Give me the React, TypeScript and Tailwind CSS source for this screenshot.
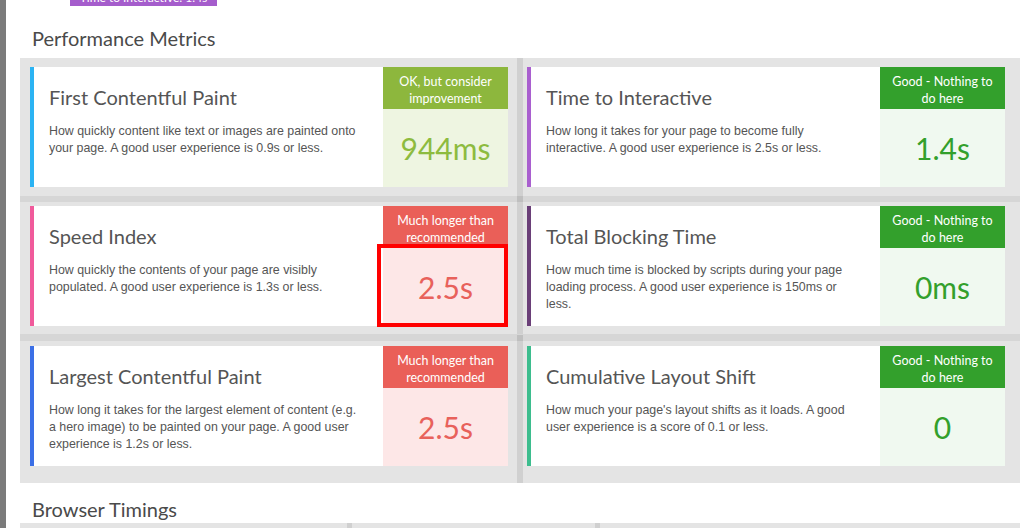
type Tone = 'ok' | 'good' | 'bad';

interface Metric {
  title: string;
  lines: string[];
  bar: string;
  tone: Tone;
  label: string[];
  value: string;
  marked?: boolean;
}

const tones = {
  ok: { head: 'bg-[#8db73d]', panel: 'bg-[#eef5e1]', text: 'text-[#8dbb3f]' },
  good: { head: 'bg-[#33a02c]', panel: 'bg-[#f0f9f0]', text: 'text-[#33a02c]' },
  bad: { head: 'bg-[#ea5f58]', panel: 'bg-[#fde7e7]', text: 'text-[#e8615b]' },
} as const;

const rows: [Metric, Metric][] = [
  [
    {
      title: 'First Contentful Paint',
      lines: ['How quickly content like text or images are painted onto', 'your page. A good user experience is 0.9s or less.'],
      bar: 'border-[#2bb3f3]',
      tone: 'ok',
      label: ['OK, but consider', 'improvement'],
      value: '944ms',
    },
    {
      title: 'Time to Interactive',
      lines: ['How long it takes for your page to become fully', 'interactive. A good user experience is 2.5s or less.'],
      bar: 'border-[#a95fcf]',
      tone: 'good',
      label: ['Good - Nothing to', 'do here'],
      value: '1.4s',
    },
  ],
  [
    {
      title: 'Speed Index',
      lines: ['How quickly the contents of your page are visibly', 'populated. A good user experience is 1.3s or less.'],
      bar: 'border-[#f05a9b]',
      tone: 'bad',
      label: ['Much longer than', 'recommended'],
      value: '2.5s',
      marked: true,
    },
    {
      title: 'Total Blocking Time',
      lines: [
        'How much time is blocked by scripts during your page',
        'loading process. A good user experience is 150ms or',
        'less.',
      ],
      bar: 'border-[#6a3f78]',
      tone: 'good',
      label: ['Good - Nothing to', 'do here'],
      value: '0ms',
    },
  ],
  [
    {
      title: 'Largest Contentful Paint',
      lines: [
        'How long it takes for the largest element of content (e.g.',
        'a hero image) to be painted on your page. A good user',
        'experience is 1.2s or less.',
      ],
      bar: 'border-[#3b6fe6]',
      tone: 'bad',
      label: ['Much longer than', 'recommended'],
      value: '2.5s',
    },
    {
      title: 'Cumulative Layout Shift',
      lines: ["How much your page's layout shifts as it loads. A good", 'user experience is a score of 0.1 or less.'],
      bar: 'border-[#3dbd8e]',
      tone: 'good',
      label: ['Good - Nothing to', 'do here'],
      value: '0',
    },
  ],
];

const heading = "font-['Lato','Noto_Sans',sans-serif]";

function MetricCard({ m }: { m: Metric }) {
  const t = tones[m.tone];
  return (
    <div className="flex h-[120px] w-[478px] bg-white">
      <div className={`flex-1 border-l-4 ${m.bar} pl-[15px] pt-[18px]`}>
        <div className={`${heading} text-[20px] leading-[24px] text-[#555]`}>{m.title}</div>
        <div className="mt-[14px] font-['Liberation_Sans',Arial,sans-serif] text-[12.4px] leading-[17px] text-[#555] whitespace-nowrap">
          {m.lines.map((l, i) => (
            <div key={i}>{l}</div>
          ))}
        </div>
      </div>
      <div className={`relative flex w-[125px] flex-col ${t.panel}`}>
        <div className={`${t.head} h-[42px] pt-[6px] text-center ${heading} text-[12.5px] leading-[17px] text-white`}>
          {m.label.map((l, i) => (
            <div key={i}>{l}</div>
          ))}
        </div>
        <div className={`flex flex-1 items-center justify-center ${heading} text-[30px] ${t.text}`}>{m.value}</div>
        {m.marked && (
          <div className="absolute left-[-6px] right-0 top-[38px] bottom-[-1px] border-[4px] border-[#ff0000]" />
        )}
      </div>
    </div>
  );
}

function HSep() {
  return (
    <div className="flex h-[6px]">
      <div className="w-[497px] bg-[#d6d6d6]" />
      <div className="w-[6px] bg-[#bfbfbf]" />
      <div className="flex-1 bg-[#d6d6d6]" />
    </div>
  );
}

export default function App() {
  const pads = ['pt-[9px] pb-[9px]', 'pt-[4px] pb-[8px]', 'pt-[5px] pb-[17px]'];
  return (
    <div className="flex h-[528px] overflow-hidden bg-white">
      <div className="w-[6px] shrink-0 bg-[#7b7b7b]" />
      <div className="flex-1 pl-[14px] pr-[4px]">
        {/* badge from the section above, cut off by the viewport */}
        <div className={`-mt-[12px] ml-[50px] h-[18px] w-[147px] bg-[#a55dcc] pt-[3px] text-center ${heading} text-[12px] leading-[14px] text-white`}>
          Time to Interactive: 1.4s
        </div>

        <h2 className={`mt-[18px] mb-[6px] pl-[12px] ${heading} text-[20px] leading-[28px] text-[#4a4a4a]`}>
          Performance Metrics
        </h2>

        <div className="bg-[#e4e4e4]">
          {rows.map((row, i) => (
            <div key={i}>
              {i === 1 && <HSep />}
              {i === 2 && <div className="h-px bg-[#d6d6d6]" />}
              {i === 2 && <HSep />}
              <div className="flex">
                <div className={`w-[497px] pl-[10px] ${pads[i]}`}>
                  <MetricCard m={row[0]} />
                </div>
                <div className="w-[6px] bg-[#d0d0d0]" />
                <div className={`flex-1 pl-[4px] ${pads[i]}`}>
                  <MetricCard m={row[1]} />
                </div>
              </div>
            </div>
          ))}
        </div>

        <h2 className={`mt-[12px] pl-[12px] ${heading} text-[20px] leading-[28px] text-[#4a4a4a]`}>Browser Timings</h2>
        <div className="flex h-[8px] bg-[#e4e4e4]">
          <div className="w-[327px]" />
          <div className="w-[5px] bg-[#d0d0d0]" />
          <div className="w-[243px]" />
          <div className="w-[5px] bg-[#d0d0d0]" />
        </div>
      </div>
    </div>
  );
}
